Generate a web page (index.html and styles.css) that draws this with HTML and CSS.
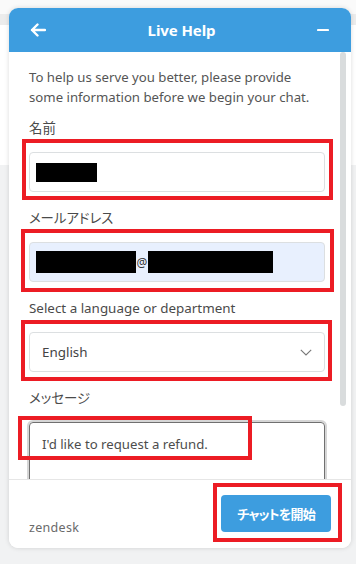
FILE: index.html
```html
<!DOCTYPE html>
<html lang="ja">
<head>
<meta charset="utf-8">
<link rel="stylesheet" href="styles.css">
</head>
<body>
<div class="page">
  <div class="page-top"></div>
  <div class="page-bar"></div>
  <div class="page-block"></div>
</div>
<div class="widget">
  <header class="head">
    <svg class="ico" width="16" height="14" viewBox="0 0 16 14"><path d="M15 7H2M7.5 1.5 2 7l5.5 5.5" fill="none" stroke="#fff" stroke-width="2.4" stroke-linecap="round" stroke-linejoin="round"/></svg>
    <h1 class="title">Live Help</h1>
    <svg class="ico" width="12" height="14" viewBox="0 0 12 14"><path d="M1 7h10" stroke="#fff" stroke-width="2.2" stroke-linecap="round"/></svg>
  </header>
  <div class="body">
    <div class="form">
      <p class="intro">To help us serve you better, please provide some information before we begin your chat.</p>
      <div class="label">名前</div>
      <div class="field field-name"><span class="redact r-name"></span></div>
      <div class="label">メールアドレス</div>
      <div class="field field-email"><span class="redact r-mail1"></span><span class="at">@</span><span class="redact r-mail2"></span></div>
      <div class="label">Select a language or department</div>
      <div class="field field-select"><span class="value">English</span>
        <svg width="12" height="7" viewBox="0 0 12 7"><path d="M.8.8 6 6 11.2.8" fill="none" stroke="#777" stroke-width="1.1"/></svg>
      </div>
      <div class="label">メッセージ</div>
      <div class="textarea">I'd like to request a refund.</div>
    </div>
    <div class="track"><div class="thumb"></div></div>
  </div>
  <footer class="foot">
    <span class="brand">zendesk</span>
    <button class="start">チャットを開始</button>
  </footer>
  <div class="mark mk-name"></div>
  <div class="mark mk-mail"></div>
  <div class="mark mk-select"></div>
  <div class="mark mk-msg"></div>
  <div class="mark mk-btn"></div>
</div>
</body>
</html>
```
FILE: styles.css
```css
* { box-sizing: border-box; }
html, body { margin: 0; padding: 0; }
body {
  width: 356px;
  height: 564px;
  overflow: hidden;
  background: #f1f2f3;
  font-family: "Noto Sans", "Noto Sans CJK JP", sans-serif;
  position: relative;
}
.page-top { height: 14px; background: #fafafa; }
.page-bar { height: 11px; background: #ececec; }
.page-block { height: 140px; background: #ffffff; }

.widget {
  position: absolute;
  left: 9px;
  top: 8px;
  width: 342px;
  height: 540px;
  background: #fff;
  border-radius: 9px;
  box-shadow: 0 0 5px rgba(0, 0, 0, 0.14);
  display: flex;
  flex-direction: column;
}
.head {
  height: 44px;
  flex: none;
  background: #3d9ddf;
  border-radius: 9px 9px 0 0;
  display: flex;
  align-items: center;
  justify-content: space-between;
  padding: 0 22px 0 21px;
}
.title {
  margin: 0;
  color: #fff;
  font-size: 15px;
  font-weight: 700;
  letter-spacing: -0.1px;
}
.body {
  flex: 1;
  min-height: 0;
  overflow: hidden;
  display: flex;
  padding-left: 20px;
}
.form { width: 296px; flex: none; padding-top: 16px; }
.track { width: 6px; margin-left: 15px; flex: none; }
.thumb { height: 354px; background: #d9dcdd; border-radius: 3px; }

.intro {
  margin: 0 0 11px;
  font-size: 13.2px;
  line-height: 19.5px;
  color: #555;
}
.label {
  font-size: 13.4px;
  line-height: 20px;
  color: #4a4a4a;
  margin-bottom: 14px;
  font-feature-settings: "palt";
}
.field {
  height: 40px;
  border: 1px solid #dcdfe1;
  border-radius: 4px;
  display: flex;
  align-items: center;
  margin-bottom: 16px;
}
.field-name, .field-email { padding-left: 6px; }
.field-email { background: #e8f0fe; }
.redact { display: block; background: #000; }
.r-name { width: 61px; height: 19px; }
.r-mail1 { width: 100px; height: 22px; }
.r-mail2 { width: 125px; height: 22px; }
.at { font-size: 12px; color: #333; width: 12px; text-align: center; line-height: 1; padding-top: 2px; }
.field-select { padding: 0 12px; justify-content: space-between; }
.value { font-size: 13.4px; color: #444; }
.textarea {
  height: 110px;
  border: 1px solid #707070;
  border-radius: 4px;
  box-shadow: 0 0 0 2px #d6d6d6;
  padding: 11px 12px;
  font-size: 13.2px;
  color: #4d4d4d;
  line-height: 20px;
}
.foot {
  flex: none;
  height: 69px;
  border-top: 1px solid #e6e6e6;
  display: flex;
  justify-content: space-between;
  align-items: flex-end;
  padding: 15px 20px 16px;
  background: #fff;
  border-radius: 0 0 9px 9px;
}
.brand {
  font-size: 12.5px;
  color: #6a6a6a;
  line-height: 16px;
  margin-bottom: -4px;
  letter-spacing: 0.3px;
}
.start {
  width: 110px;
  height: 37px;
  border: 0;
  border-radius: 4px;
  background: #3d9ddf;
  color: #fff;
  font-family: "Noto Sans CJK JP", sans-serif;
  font-size: 13px;
  font-weight: 700;
  letter-spacing: -0.8px;
  font-feature-settings: "palt";
  padding: 0;
}
.mark {
  position: absolute;
  border: 4px solid #ec1c24;
}
.mk-name { left: 13px; top: 131px; width: 311px; height: 61px; }
.mk-mail { left: 12px; top: 221px; width: 313px; height: 63px; }
.mk-select { left: 12px; top: 312px; width: 311px; height: 61px; }
.mk-msg { left: 9px; top: 408px; width: 234px; height: 44px; }
.mk-btn { left: 204px; top: 475px; width: 129px; height: 59px; }
```
